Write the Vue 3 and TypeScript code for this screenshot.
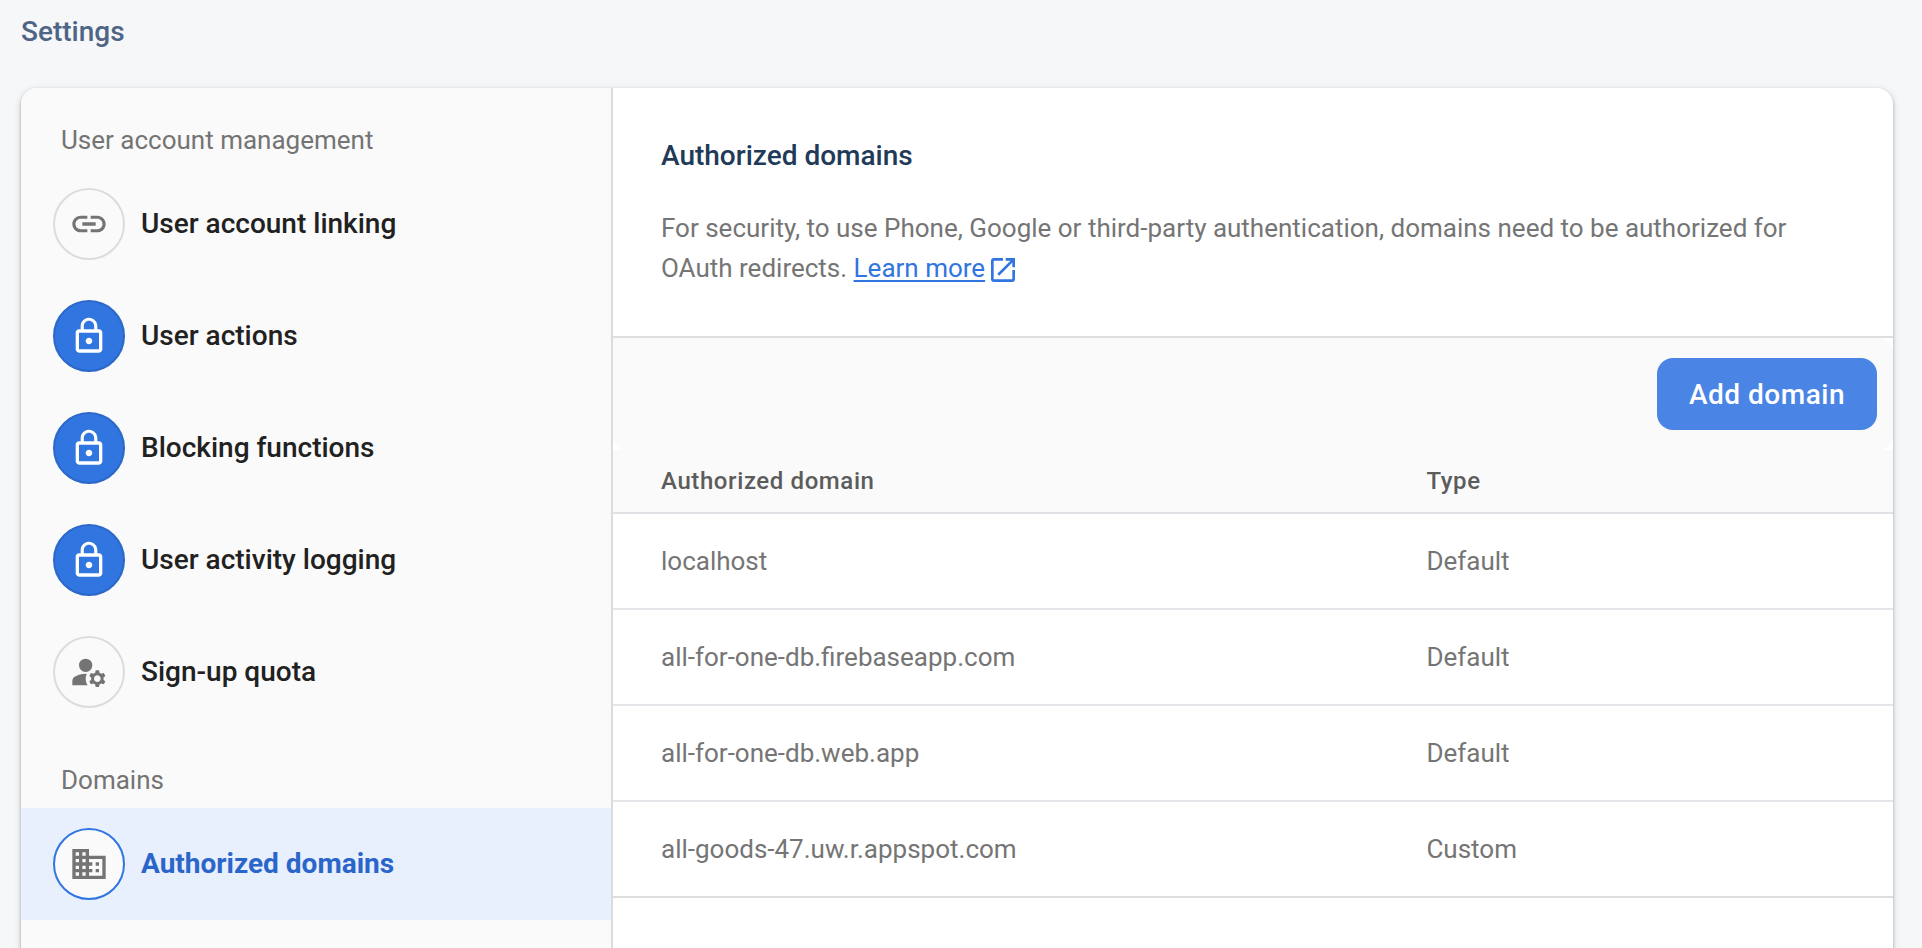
<script setup lang="ts">
type IconName = 'link' | 'lock' | 'manage' | 'domain'

interface NavItem {
  label: string
  icon: IconName
  active?: boolean
}

interface NavSection {
  title: string
  items: NavItem[]
}

interface DomainRow {
  domain: string
  type: string
}

const icons: Record<IconName, string> = {
  link: 'M3.9 12c0-1.71 1.39-3.1 3.1-3.1h4V7H7c-2.76 0-5 2.24-5 5s2.24 5 5 5h4v-1.9H7c-1.71 0-3.1-1.39-3.1-3.1zM8 13h8v-2H8v2zm9-6h-4v1.9h4c1.71 0 3.1 1.39 3.1 3.1s-1.39 3.1-3.1 3.1h-4V17h4c2.76 0 5-2.24 5-5s-2.24-5-5-5z',
  lock: 'M12 17c1.1 0 2-.9 2-2s-.9-2-2-2-2 .9-2 2 .9 2 2 2zm6-9h-1V6c0-2.76-2.24-5-5-5S7 3.24 7 6v2H6c-1.1 0-2 .9-2 2v10c0 1.1.9 2 2 2h12c1.1 0 2-.9 2-2V10c0-1.1-.9-2-2-2zM8.9 6c0-1.71 1.39-3.1 3.1-3.1s3.1 1.39 3.1 3.1v2H8.9V6zM18 20H6V10h12v10z',
  manage: 'M10 4a4 4 0 1 0 0 8 4 4 0 0 0 0-8zM10.67 13.02C10.45 13.01 10.23 13 10 13c-2.42 0-4.68.67-6.61 1.82-.88.52-1.39 1.5-1.39 2.53V20h9.26C10.47 18.87 10 17.49 10 16c0-1.07.25-2.07.67-2.98zM20.75 16c0-.22-.03-.42-.06-.63l1.14-1.01-1-1.73-1.45.49c-.32-.27-.68-.48-1.08-.63L18 11h-2l-.3 1.49c-.4.15-.76.36-1.08.63l-1.45-.49-1 1.73 1.14 1.01c-.03.21-.06.41-.06.63s.03.42.06.63l-1.14 1.01 1 1.73 1.45-.49c.32.27.68.48 1.08.63L16 21h2l.3-1.49c.4-.15.76-.36 1.08-.63l1.45.49 1-1.73-1.14-1.01c.03-.21.06-.41.06-.63zM17 18c-1.1 0-2-.9-2-2s.9-2 2-2 2 .9 2 2-.9 2-2 2z',
  domain: 'M12 7V3H2v18h20V7H12zM6 19H4v-2h2v2zm0-4H4v-2h2v2zm0-4H4V9h2v2zm0-4H4V5h2v2zm4 12H8v-2h2v2zm0-4H8v-2h2v2zm0-4H8V9h2v2zm0-4H8V5h2v2zm10 12h-8v-2h2v-2h-2v-2h2v-2h-2V9h8v10zm-2-8h-2v2h2v-2zm0 4h-2v2h2v-2z',
}

const sections: NavSection[] = [
  {
    title: 'User account management',
    items: [
      { label: 'User account linking', icon: 'link' },
      { label: 'User actions', icon: 'lock' },
      { label: 'Blocking functions', icon: 'lock' },
      { label: 'User activity logging', icon: 'lock' },
      { label: 'Sign-up quota', icon: 'manage' },
    ],
  },
  {
    title: 'Domains',
    items: [{ label: 'Authorized domains', icon: 'domain', active: true }],
  },
]

const rows: DomainRow[] = [
  { domain: 'localhost', type: 'Default' },
  { domain: 'all-for-one-db.firebaseapp.com', type: 'Default' },
  { domain: 'all-for-one-db.web.app', type: 'Default' },
  { domain: 'all-goods-47.uw.r.appspot.com', type: 'Custom' },
]
</script>

<template>
  <div class="page">
    <h1 class="page-title">Settings</h1>
    <main class="card">
      <nav class="sidebar">
        <section v-for="section in sections" :key="section.title">
          <h2 class="section-title">{{ section.title }}</h2>
          <a
            v-for="item in section.items"
            :key="item.label"
            class="nav-item"
            :class="{ active: item.active }"
          >
            <span class="nav-icon" :class="{ locked: item.icon === 'lock' }">
              <svg viewBox="0 0 24 24"><path :d="icons[item.icon]" /></svg>
            </span>
            <span class="nav-label">{{ item.label }}</span>
          </a>
        </section>
      </nav>
      <div class="content">
        <header class="intro">
          <h2 class="heading">Authorized domains</h2>
          <p class="description">
            For security, to use Phone, Google or third-party authentication, domains need to be authorized for OAuth redirects.
            <a class="learn"><span class="learn-text">Learn more</span><svg class="external" viewBox="0 0 24 24"><path d="M19 19H5V5h7V3H5c-1.11 0-2 .9-2 2v14c0 1.1.89 2 2 2h14c1.1 0 2-.9 2-2v-7h-2v7zM14 3v2h3.59l-9.83 9.83 1.41 1.41L19 6.41V10h2V3h-7z" /></svg></a>
          </p>
        </header>
        <div class="toolbar">
          <button class="add" type="button">Add domain</button>
        </div>
        <div class="table">
          <div class="row head">
            <span>Authorized domain</span>
            <span>Type</span>
          </div>
          <div v-for="row in rows" :key="row.domain" class="row">
            <span>{{ row.domain }}</span>
            <span>{{ row.type }}</span>
          </div>
        </div>
      </div>
    </main>
  </div>
</template>

<style>
body {
  background: #f6f7f9;
  overflow: hidden;
}
</style>

<style scoped>
.page {
  box-sizing: border-box;
  height: 948px;
  overflow: hidden;
  padding: 0 29px 0 21px;
  display: flex;
  flex-direction: column;
  background: #f6f7f9;
  font-family: Roboto, "Liberation Sans", sans-serif;
  -webkit-font-smoothing: antialiased;
}

h1,
h2,
p {
  margin: 0;
  font-weight: 400;
}

.page-title {
  flex: none;
  height: 88px;
  box-sizing: border-box;
  padding-top: 12px;
  font-size: 28px;
  line-height: 40px;
  font-weight: 500;
  color: #4e6586;
}

.card {
  flex: none;
  height: 980px;
  display: flex;
  background: #fff;
  border-radius: 16px;
  box-shadow: 0 2px 4px rgba(0, 0, 0, 0.2), 0 1px 2px rgba(0, 0, 0, 0.14), 0 2px 10px rgba(0, 0, 0, 0.1);
}

.sidebar {
  flex: none;
  box-sizing: border-box;
  width: 592px;
  background: #fafafa;
  border-right: 2px solid #dcdcdc;
  border-radius: 16px 0 0 0;
}

.section-title {
  padding: 32px 40px 8px;
  font-size: 26px;
  line-height: 40px;
  color: #747474;
}

.nav-item {
  display: flex;
  align-items: center;
  gap: 16px;
  height: 112px;
  padding-left: 32px;
  color: #212121;
  font-size: 28px;
  line-height: 40px;
  font-weight: 500;
}

.nav-label {
  padding-bottom: 1px;
}

.nav-icon {
  box-sizing: border-box;
  width: 72px;
  height: 72px;
  display: flex;
  align-items: center;
  justify-content: center;
  border: 2px solid #dcdcdc;
  border-radius: 50%;
  background: #fafafa;
  color: #747474;
}

.nav-icon svg {
  width: 40px;
  height: 40px;
  fill: currentColor;
}

.nav-icon.locked {
  background: #3075e0;
  border-color: #2b68c8;
  color: #fff;
}

.nav-item.active {
  background: #e8effd;
  color: #2a66ca;
  font-weight: 700;
}

.active .nav-icon {
  border-color: #3075e0;
}

.content {
  flex: 1;
  min-width: 0;
}

.intro {
  box-sizing: border-box;
  height: 250px;
  padding: 48px 48px 0;
  border-bottom: 2px solid #dedede;
}

.heading {
  font-size: 28px;
  line-height: 40px;
  font-weight: 500;
  color: #213a58;
}

.description {
  margin-top: 32px;
  font-size: 26px;
  line-height: 40px;
  color: #757575;
}

.learn {
  color: #3075e0;
}

.learn-text {
  text-decoration: underline;
  text-decoration-thickness: 2px;
  text-underline-offset: 3px;
}

.external {
  width: 32px;
  height: 32px;
  margin-left: 2px;
  vertical-align: -9px;
  fill: currentColor;
}

.toolbar {
  display: flex;
  align-items: center;
  justify-content: flex-end;
  box-sizing: border-box;
  height: 112px;
  padding-right: 16px;
  background: #fafafa;
  border-radius: 0 14px 14px 14px;
}

.add {
  width: 220px;
  height: 72px;
  padding: 2px 0 0;
  border: 0;
  border-radius: 16px;
  background: #4a84e4;
  color: #fff;
  font: 500 28px/40px Roboto, "Liberation Sans", sans-serif;
  letter-spacing: 0.5px;
}

.row {
  display: grid;
  grid-template-columns: 765.4px 1fr;
  align-items: center;
  box-sizing: border-box;
  height: 96px;
  padding-left: 48px;
  border-bottom: 2px solid #e5e5ea;
  font-size: 26px;
  color: #757575;
}

.row:last-child {
  border-bottom-color: #dedede;
}

.row.head {
  height: 64px;
  background: #fafafa;
  border-bottom-color: #e2e2e6;
  font-size: 24px;
  font-weight: 500;
  letter-spacing: 0.6px;
  color: #5c5c5c;
}
</style>
